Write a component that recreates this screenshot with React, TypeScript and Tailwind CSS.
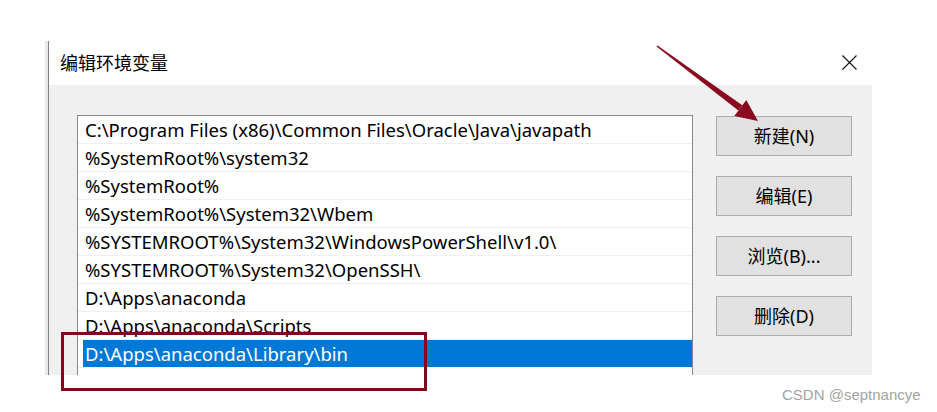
import React from "react"

const paths = [
  "C:\\Program Files (x86)\\Common Files\\Oracle\\Java\\javapath",
  "%SystemRoot%\\system32",
  "%SystemRoot%",
  "%SystemRoot%\\System32\\Wbem",
  "%SYSTEMROOT%\\System32\\WindowsPowerShell\\v1.0\\",
  "%SYSTEMROOT%\\System32\\OpenSSH\\",
  "D:\\Apps\\anaconda",
  "D:\\Apps\\anaconda\\Scripts",
  "D:\\Apps\\anaconda\\Library\\bin",
]

const buttons = ["新建(N)", "编辑(E)", "浏览(B)...", "删除(D)"]

const uiFont = {
  fontFamily: '"Noto Sans", "Noto Sans CJK SC", sans-serif',
}

const App = () => {
  return (
    <div
      className="relative h-[412px] w-[937px] overflow-hidden bg-white"
      style={uiFont}
    >
      <div className="flex pl-[45px] pt-[41px]">
        {/* background window edge */}
        <div className="h-[334px] w-[3px] bg-[#e8e8e8]" />
        <div className="h-[334px] w-px bg-[#808080]" />

        <div className="flex h-[334px] w-[823px] flex-col">
          <div className="flex h-[44px] items-center justify-between bg-white pl-[11px] pr-[15px]">
            <span className="text-[18px] leading-none text-black">编辑环境变量</span>
            <svg width="15" height="15" viewBox="0 0 15 15" className="mt-[-2px]">
              <path d="M0.5 0.5 L14.5 14.5 M14.5 0.5 L0.5 14.5" stroke="#111" strokeWidth="1.1" />
            </svg>
          </div>

          <div className="flex flex-1 overflow-hidden bg-[#f0f0f0] pl-[28px] pt-[30px]">
            <div className="h-[300px] w-[616px] border border-[#828790] bg-white">
              {paths.map((p, i) =>
                i === paths.length - 1 ? (
                  <div key={p} className="border-b border-[#f0f0f0] pl-[5px]">
                    <div className="flex h-[27px] items-center bg-[#0078d7] pl-[2px] text-[18.5px] text-white">
                      {p}
                    </div>
                  </div>
                ) : (
                  <div
                    key={p}
                    className="flex h-[28px] items-center border-b border-[#f0f0f0] pl-[7px] text-[18.5px] text-black"
                  >
                    {p}
                  </div>
                )
              )}
            </div>

            <div className="ml-[23px] flex flex-col gap-[20px] pt-px">
              {buttons.map((b) => (
                <div
                  key={b}
                  className="flex h-[40px] w-[136px] items-center justify-center border border-[#adadad] bg-[#e1e1e1] text-[18px] text-black"
                >
                  {b}
                </div>
              ))}
            </div>
          </div>
        </div>
      </div>

      {/* annotation: highlight box */}
      <div className="absolute left-[61px] top-[332px] h-[59px] w-[366px] border-[3px] border-[#7f0a1f]" />

      {/* annotation: arrow */}
      <svg className="absolute left-0 top-0" width="937" height="412" viewBox="0 0 937 412">
        <polygon
          points="656.5,46.6 657.5,45.4 742.3,105.2 738.3,110.6"
          fill="#8a0a20"
        />
        <polygon points="758,121 734.3,115.9 746.3,99.9" fill="#8a0a20" />
      </svg>

      <div
        className="absolute left-[782px] top-[384px] text-[15px] text-[#a3a3a3]"
        style={{ fontFamily: '"Liberation Sans", Arial, sans-serif' }}
      >
        CSDN @septnancye
      </div>
    </div>
  )
}

export default App
